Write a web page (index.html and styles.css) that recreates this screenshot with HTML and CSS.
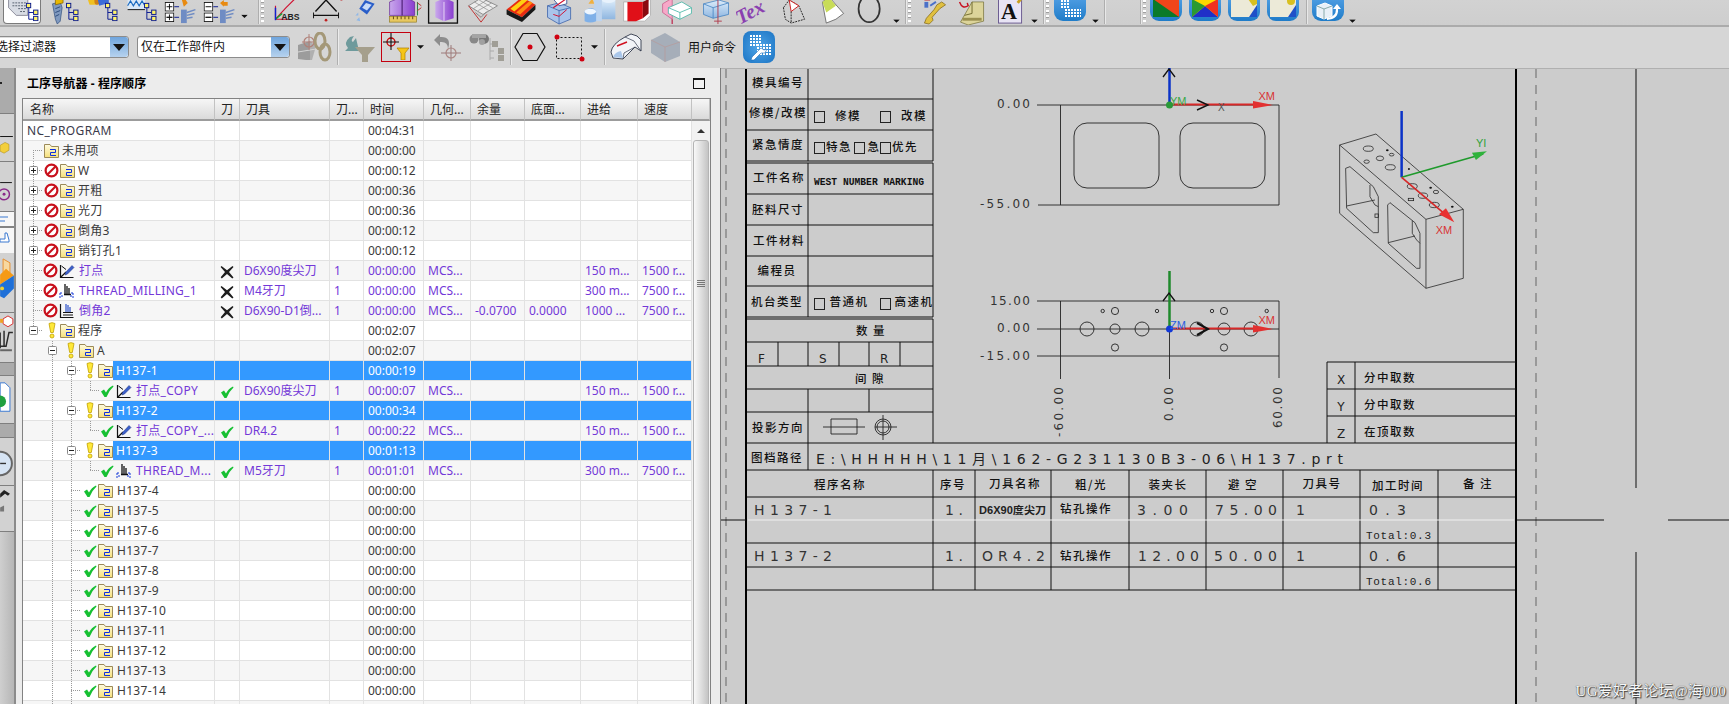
FILE: index.html
```html
<!DOCTYPE html>
<html lang="zh-CN">
<head>
<meta charset="utf-8">
<title>工序导航器 - 程序顺序</title>
<link rel="stylesheet" href="styles.css">
</head>
<body>
<svg class="defs" aria-hidden="true">
  <defs>
    <linearGradient id="fy" x1="0" y1="0" x2="0" y2="1"><stop offset="0" stop-color="#fffbe0"/><stop offset="1" stop-color="#f6e07a"/></linearGradient>
    <linearGradient id="pu" x1="0" y1="0" x2="1" y2="0"><stop offset="0" stop-color="#c9a8ec"/><stop offset="1" stop-color="#8a3fd0"/></linearGradient>
    <linearGradient id="lb" x1="0" y1="0" x2="0" y2="1"><stop offset="0" stop-color="#dcecfa"/><stop offset="1" stop-color="#8fb6e0"/></linearGradient>
    <symbol id="tree" viewBox="0 0 14 20"><path d="M3 4V18H8M3 11H8" fill="none" stroke="#0a1a90"/><rect x=".5" y="1.5" width="4.5" height="4.5" fill="#fff36a" stroke="#0a1a90"/><rect x="8" y="8.5" width="4.5" height="4.5" fill="#fff36a" stroke="#0a1a90"/><rect x="8" y="15" width="4.5" height="4.5" fill="#fff36a" stroke="#0a1a90"/></symbol>
    <symbol id="folder" viewBox="0 0 15 15"><path d="M.5 14.5V1.5H6L7.500 3.500H14.500V14.500Z" fill="url(#fy)" stroke="#9c8a58"/><path d="M6 6.500H11.500V9.500H6.500V12.500H12" fill="none" stroke="#1030e0"/></symbol>
    <symbol id="noent" viewBox="0 0 15 15"><circle cx="7.500" cy="7.500" r="5.900" fill="#fff" stroke="#c8101c" stroke-width="2.200"/><path d="M3.500 11.500L11.500 3.500" stroke="#c8101c" stroke-width="2.200"/></symbol>
    <symbol id="bulb" viewBox="0 0 10 17"><path d="M2 1.500Q5 -.2 8 1.500L6.300 10.500H3.700Z" fill="#ffe93a" stroke="#c2a100" stroke-width=".8"/><circle cx="5" cy="14" r="2" fill="#ffe93a" stroke="#c2a100" stroke-width=".8"/></symbol>
    <symbol id="chk" viewBox="0 0 14 14"><path d="M1 7.500L4 5.500L6 8.500Q8.500 3.500 13 1.500L13.500 2.500Q9 6.500 6.500 13H4.500Z" fill="#16c032"/></symbol>
    <symbol id="cross" viewBox="0 0 14 14"><path d="M1.500 1L7 5.300L12.500 1L13.500 2L9 7L13.500 12.500L12.300 13.500L7 9L1.800 13.500L.7 12.300L5 7L.6 2Z" fill="#1d1d1d"/></symbol>
    <symbol id="op1" viewBox="0 0 16 16"><path d="M1.500 2V14.500H14.500M1.500 14.500L7 9" fill="none" stroke="#111" stroke-width="1.200"/><path d="M2.500 3L7 6.500" stroke="#111"/><path d="M6.500 9.500L13 2.500L15 4.500L8.500 11L6 12Z" fill="#3b5fc8" stroke="#1a2f80" stroke-width=".5"/></symbol>
    <symbol id="op2" viewBox="0 0 16 16"><path d="M6 1V11M8 3V11M10 5V11M5 11.500H12" stroke="#111" stroke-width="1.300"/><path d="M1 10H4M1 10V15.500M12 10H15M2 13H5M11 13H13M14 10V15.500" stroke="#1438d8" stroke-width="1" fill="none" stroke-dasharray="2 1"/></symbol>
    <symbol id="op3" viewBox="0 0 16 16"><path d="M1.500 1V14.500H14.500" fill="none" stroke="#111" stroke-width="1.200"/><path d="M4 9.500H14M4 12H14" stroke="#111"/><path d="M7 1V9M9 2V9M11 4V9" stroke="#4a6ad0" stroke-width="1.400"/></symbol>
    <symbol id="plus" viewBox="0 0 9 9"><rect x=".5" y=".5" width="8" height="8" rx="1" fill="#fff" stroke="#8a8a8a"/><path d="M2 4.500H7M4.500 2V7" stroke="#222"/></symbol>
    <symbol id="minus" viewBox="0 0 9 9"><rect x=".5" y=".5" width="8" height="8" rx="1" fill="#fff" stroke="#8a8a8a"/><path d="M2 4.500H7" stroke="#222"/></symbol>
    <symbol id="pm" viewBox="0 0 10 10"><rect x=".5" y=".5" width="9" height="9" fill="#fff" stroke="#111"/><path d="M2 5H8" stroke="#111"/></symbol>
    <symbol id="drop" viewBox="0 0 8 4"><path d="M0 0H8L4 4Z" fill="#111"/></symbol>
  </defs>
</svg>

<header class="tb1">
  <div class="pressed">
    <svg class="i38" viewBox="0 0 38 26"><path d="M4-2H24V16H12L4 8Z" fill="#d8dce4" stroke="#667" stroke-width=".7"/><path d="M8 3H22M8 6H22M14 9H22M16 12H22" stroke="#55606e" stroke-dasharray="2 1"/><use href="#tree" x="22" y="2" width="14" height="20"/></svg>
  </div>
  <div class="grp g46">
    <svg class="i38" viewBox="0 0 38 26"><path d="M6 4L14 2L16 8L14 22L11 25L9 20Z" fill="#7f99bf" stroke="#2c4a7a" stroke-width=".7"/><path d="M9 9L14 7M9 13L14 11M9 17L13 15" stroke="#2c4a7a"/><path d="M9-2L17-2L17 3L9 5Z" fill="#e8b800" stroke="#7a5b00" stroke-width=".7"/><use href="#tree" x="20" y="2" width="14" height="20"/></svg>
    <svg class="i38" viewBox="0 0 38 26"><path d="M2-1H12V5H4Z" fill="#f0c020"/><ellipse cx="12" cy="1" rx="3" ry="4" fill="#d08018"/><path d="M12-3H24V3L14 6Z" fill="#3a6ad8"/><use href="#tree" x="20" y="2" width="14" height="20"/></svg>
    <svg class="i38" viewBox="0 0 38 26"><path d="M3-1V10H21V-1Z" fill="#d8e8f8"/><path d="M3 6L6 1L9 6L12 1L15 6L18 1L21 6" fill="none" stroke="#1a6ac0" stroke-width="1.200"/><path d="M3 10H21" stroke="#111"/><use href="#tree" x="20" y="2" width="14" height="20"/></svg>
    <svg class="i38" viewBox="0 0 38 26"><use href="#pm" x="2" y="2" width="10" height="10"/><use href="#pm" x="2" y="13" width="10" height="10"/><path d="M7 4V10M4 18H10M7 15V21" stroke="#111"/><path d="M12 7H17M12 18H17" stroke="#0a1a90"/><path d="M20 0H24L26 3L22 7L21 4Z" fill="#e88a10"/><path d="M19 10H25V24H19Z" fill="#6f8cc4"/><path d="M25 13L34 10M25 16L33 14M25 19L31 18" stroke="#6f8cc4" stroke-width="1.500"/></svg>
    <svg class="i38" viewBox="0 0 38 26"><use href="#pm" x="2" y="2" width="10" height="10"/><use href="#pm" x="2" y="13" width="10" height="10"/><path d="M4 18H10" stroke="#111"/><path d="M12 7H17M12 18H17" stroke="#0a1a90"/><path d="M19 3L23 0V2H27V6H23V7Z" fill="#e88a10"/><path d="M19 10H25V24H19Z" fill="#6f8cc4"/><path d="M25 13L34 10M25 16L33 14M25 19L31 18" stroke="#6f8cc4" stroke-width="1.500"/></svg>
    <svg class="dr" viewBox="0 0 8 26"><use href="#drop" x="1" y="15" width="7" height="4"/></svg>
  </div>
  <i class="vsep s1"></i><i class="dots"></i>
  <div class="grp g2">
    <svg class="i39" viewBox="0 0 39 26"><path d="M7 20V6M7 20L18 8M7 20H20M18 8L28 -2" fill="none" stroke="#d01030" stroke-width="1.200"/><path d="M7 20L14 14" stroke="#10a030" stroke-width="1.500"/><path d="M7 8V21" stroke="#1020d0" stroke-width="1.500"/><text x="13" y="21" class="abs">ABS</text></svg>
    <svg class="i39" viewBox="0 0 39 26"><path d="M8 12L19 0L30 12M6 16H32" fill="none" stroke="#111" stroke-width="1.400"/><path d="M6 13V19M32 13V19" stroke="#111"/><circle cx="19" cy="21" r="1.400" fill="#c02020"/><path d="M34 0H36" stroke="#c02020"/></svg>
    <svg class="i39" viewBox="0 0 39 26"><path d="M19 0L29 4L21 15L13 9Z" fill="#2a5ec8"/><path d="M20 3L26 5L21 11L16 8Z" fill="#c8dcf8"/><path d="M9 16L12 13L12 16ZM10 21L13 18L14 22Z" fill="#8fb8e8"/></svg>
    <svg class="i39" viewBox="0 0 39 26"><path d="M4 2L19-4L30 2V16H4Z" fill="url(#pu)" stroke="#602090" stroke-width=".7"/><path d="M17-2V16" stroke="#3a1060"/><rect x="4" y="17" width="28" height="6" fill="#e8c860" stroke="#907a20" stroke-width=".7"/><path d="M8 17V20M12 17V20M16 17V20M20 17V20M24 17V20M28 17V20" stroke="#604a10"/><path d="M33 2V16" stroke="#208040"/><path d="M33 3L37 6M33 11L37 8" stroke="#c03030"/></svg>
    <svg class="i39" viewBox="0 0 39 26"><rect x="4" y="-2" width="30" height="26" fill="none" stroke="#111" stroke-width="1.400"/><path d="M11 2L21-2L30 2V19L20 22L11 18Z" fill="url(#pu)"/><path d="M20 2V22" stroke="#e8d8f8"/></svg>
    <svg class="i39" viewBox="0 0 39 26"><path d="M5 6L18-2L35 6L20 15Z" fill="#ececec" stroke="#777" stroke-width=".8"/><path d="M10 9L24 0M15 11L29 3M11 2L26 11M16 0L30 8" stroke="#888" stroke-width=".7"/><path d="M5 6L18 23L24 15" fill="none" stroke="#c03030"/><path d="M12 13L18 18L24 12" fill="none" stroke="#888"/></svg>
    <svg class="i39" viewBox="0 0 39 26"><path d="M4 10L20-3L34 5L20 18Z" fill="#e82a10"/><path d="M8 9L22-2L26 0L12 12Z" fill="#ffcf10"/><path d="M14 13L28 1L31 3L18 15Z" fill="#ff8a10"/><path d="M4 10L20 18V23L4 15ZM20 18L34 5V10L20 23Z" fill="#181818"/></svg>
    <svg class="i39" viewBox="0 0 39 26"><path d="M6 6L18 3L30 8V20L18 25L6 18Z" fill="#a9c4ea" stroke="#3860a8" stroke-width=".8"/><path d="M6 6L18 11L30 8M18 11V25" fill="none" stroke="#3860a8" stroke-width=".8"/><path d="M12 -1H26V4L18 6Z" fill="#fff" stroke="#25408a" stroke-width=".8"/><path d="M12 8L28-3" stroke="#d01030" stroke-width="1.200"/><path d="M12 15L18 17L26 10" fill="none" stroke="#d01030"/></svg>
    <svg class="i39" viewBox="0 0 39 26"><path d="M14-2H22V22H14Z" fill="#bcd4f0"/><path d="M22 0V20H36V0Z" fill="url(#lb)"/><ellipse cx="29" cy="0" rx="7" ry="3" fill="#e8f2fc"/><path d="M6 10Q12 6 16 11V22Q10 25 4 22V12Z" fill="#7fb0e8"/><ellipse cx="10" cy="12" rx="6" ry="3" fill="#eef6ff"/><path d="M8 4L12-2L14 4Z" fill="#f0b040"/></svg>
    <svg class="i39" viewBox="0 0 39 26"><path d="M4 2H26L32-1V16L26 22H4Z" fill="#fff" stroke="#aaa" stroke-width=".8"/><path d="M8 2H24V19L17 22H8Z" fill="#e01018"/><path d="M24 2L30-1V14L24 19Z" fill="#8a0a10"/></svg>
    <svg class="i39" viewBox="0 0 39 26"><path d="M4 4L14-2V20L4 13Z" fill="#f7a8c8" stroke="#c05080" stroke-width=".7"/><path d="M10 8L24 2L34 8V14L22 20L10 14Z" fill="#fff" stroke="#3ab0a0" stroke-width=".8"/><path d="M10 8L22 13L34 8M22 13V20" fill="none" stroke="#3ab0a0" stroke-width=".8"/><path d="M14 20V25" stroke="#c04060" stroke-width="1.500"/></svg>
    <svg class="i39" viewBox="0 0 39 26"><path d="M6 4L22 0L32 3V15L16 19L6 15Z" fill="url(#lb)" stroke="#4080c0" stroke-width=".8"/><path d="M6 4L16 8L32 3M16 8V19" fill="none" stroke="#4080c0" stroke-width=".8"/><path d="M21-1V25M17 22H25" stroke="#b04050"/></svg>
    <svg class="i39" viewBox="0 0 39 26"><text x="2" y="20" class="tex" transform="rotate(-28 14 20)">Tex</text></svg>
    <svg class="i39" viewBox="0 0 39 26"><path d="M8 8L14 0L24 6L30 20L16 24L10 20Z" fill="none" stroke="#222" stroke-dasharray="2 1"/><path d="M14 0L24 6L16 12Z" fill="#fff" stroke="#d02020"/><path d="M16 12V24" stroke="#222" stroke-dasharray="2 1"/></svg>
    <svg class="i39" viewBox="0 0 39 26"><path d="M8 2L15-3L30 14L22 20L12 24Q10 14 8 2Z" fill="#fff" stroke="#555" stroke-width=".8"/><path d="M8 2L15-3L22 6L12 13Z" fill="#c8dc58"/></svg>
    <svg class="i39" viewBox="0 0 39 26"><ellipse cx="16" cy="9" rx="11" ry="14" fill="none" stroke="#333" stroke-width="1.800"/></svg>
    <svg class="dr" viewBox="0 0 8 26"><use href="#drop" x="1" y="20" width="7" height="4"/></svg>
  </div>
  <i class="vsep s2"></i><i class="dots"></i>
  <div class="grp g3">
    <svg class="i38" viewBox="0 0 38 26"><path d="M8 2H12V8H8Z" fill="#4a70c8"/><path d="M8 0H14" stroke="#c02020"/><path d="M26 2L30 5L24 9L16 18L17 21L13 25L8 24L10 19L18 10L21 5Z" fill="#e0c040" stroke="#7a6010" stroke-width=".7"/><path d="M14 6L20 2" stroke="#4a70c8" stroke-width="2"/></svg>
    <svg class="i38" viewBox="0 0 38 26"><path d="M10 16L18 2H30V22L14 26L6 23Z" fill="#dcd49a" stroke="#6f6a30" stroke-width=".7"/><path d="M18 2V14L10 16" fill="none" stroke="#6f6a30"/><path d="M5 2Q8 10 14 6L13 3" fill="none" stroke="#c81020" stroke-width="1.500"/><path d="M8 20H28" stroke="#9a9050" stroke-width="3"/></svg>
    <svg class="i38" viewBox="0 0 38 26"><rect x="6" y="-3" width="24" height="27" fill="#e8e4f4" stroke="#6a5a90"/><text x="8.500" y="20" class="bigA">A</text><path d="M26 3L30-2" stroke="#c8a020" stroke-width="3"/></svg>
    <svg class="dr" viewBox="0 0 8 26"><use href="#drop" x="1" y="20" width="7" height="4"/></svg>
  </div>
  <i class="vsep s3"></i><i class="dots"></i>
  <div class="grp g4">
    <div class="bbtn"><svg viewBox="0 0 32 21"><path d="M7 1H16M7 4H16M7 7H16M11 10H27M11 13H27M11 16H27" stroke="#fff" stroke-width="2" stroke-dasharray="2 1"/></svg></div>
    <svg class="dr" viewBox="0 0 8 26"><use href="#drop" x="1" y="20" width="7" height="4"/></svg>
  </div>
  <i class="vsep s4"></i>
  <i class="vsep s5"></i><i class="dots"></i>
  <div class="grp g5">
    <div class="bbtn"><svg viewBox="0 0 32 21"><rect x="3" y="-1" width="26" height="18" fill="#0a7a2a"/><path d="M3-1H29V17Z" fill="#f0451a"/><path d="M3-1L22 17H3Z" fill="#0a7a2a"/></svg></div>
    <div class="bbtn"><svg viewBox="0 0 32 21"><rect x="3" y="-1" width="26" height="18" fill="#ffd800"/><path d="M3 17L16 6L29 17Z" fill="#2030c8"/><path d="M3-1V17L16 6Z" fill="#2a9a30"/><path d="M29-1V17L16 6Z" fill="#f03020"/></svg></div>
    <div class="bbtn"><svg viewBox="0 0 32 21"><rect x="3" y="-1" width="26" height="18" fill="#ecead8"/><path d="M29 5V17H21Z" fill="#1f50c8"/><path d="M20-1H29V4L25 6Z" fill="#d8c020"/></svg></div>
    <div class="bbtn"><svg viewBox="0 0 32 21"><rect x="3" y="-1" width="26" height="18" fill="#ecead8"/><path d="M29 5V17H21Z" fill="#1f50c8"/><circle cx="24" cy="1" r="4" fill="#d8c020"/></svg></div>
  </div>
  <i class="vsep s6"></i>
  <div class="grp g6">
    <div class="bbtn"><svg viewBox="0 0 32 21"><path d="M5 6L13 3L20 6V16L12 19L5 16Z" fill="#e8f0f8" stroke="#fff"/><path d="M5 6L12 9L20 6M12 9V19" fill="none" stroke="#8aa"/><path d="M15 18Q24 17 24 9L21 9L25 4L29 9H26Q27 19 15 20Z" fill="#fff"/></svg></div>
    <svg class="dr" viewBox="0 0 8 26"><use href="#drop" x="1" y="20" width="7" height="4"/></svg>
  </div>
</header>

<div class="tb2">
  <div class="sel s-a"><span class="sel-t">选择过滤器</span><b class="sel-b"></b></div>
  <div class="sel s-b"><span class="sel-t">仅在工作部件内</span><b class="sel-b"></b></div>
  <svg class="w40 m4" viewBox="0 0 40 30"><path d="M4 13L16 9V28L12 28L4 27Z" fill="#9c9c9c"/><path d="M16 9L22 14L18 28L16 28Z" fill="#b0b0b0"/><path d="M4 20L22 17" stroke="#d4d4d4"/><circle cx="15" cy="10" r="5" fill="none" stroke="#b08078" stroke-width="1.200"/><path d="M15 2V18M8 10H22" stroke="#b08078"/><ellipse cx="26" cy="9" rx="5" ry="8" fill="none" stroke="#a49878" stroke-width="3"/><ellipse cx="31" cy="20" rx="5" ry="8" fill="none" stroke="#a49878" stroke-width="3"/></svg>
  <i class="bar m3"></i>
  <svg class="w36 m2" viewBox="0 0 36 30"><path d="M9 4Q2 10 7 15L4 18H18L15 5L12 9Q9 8 13 3Z" fill="#6e9a9c" transform="translate(0 1)"/><path d="M14 15H34L27 23V30H21V23Z" fill="#a59f8c"/></svg>
  <div class="hl m4"><svg viewBox="0 0 28 27"><circle cx="9" cy="9" r="4" fill="none" stroke="#c00" stroke-width="1.300"/><path d="M9 0V17M1 9H17" stroke="#111" stroke-width="1.100"/><path d="M15 15H27L23 20V27H19V20Z" fill="#f5c518" stroke="#b08000" stroke-width=".7"/></svg></div>
  <svg class="w10 m5" viewBox="0 0 10 6"><use href="#drop" x="1" y="1" width="7" height="4"/></svg>
  <svg class="w38 m2" viewBox="0 0 38 30"><path d="M6 8L12 2V5Q24 4 20 17Q20 9 12 10V14Z" fill="#8d8d8d"/><circle cx="23" cy="21" r="5" fill="none" stroke="#ad8a86" stroke-width="1.200"/><path d="M23 13V29M13 21H33" stroke="#9c7a7a"/></svg>
  <svg class="w38 m2" viewBox="0 0 38 30"><circle cx="6" cy="7" r="4.500" fill="#888"/><circle cx="16" cy="7" r="5" fill="#777"/><rect x="4" y="2" width="14" height="4" fill="#a4a4a4"/><circle cx="14" cy="10" r="3" fill="#a0a0a0"/><path d="M22 6V28M22 12H26M22 19H26M22 26H26" stroke="#aaa"/><rect x="24" y="9" width="6" height="6" fill="#a09e96"/><rect x="30" y="16" width="6" height="6" fill="#a09e96"/><rect x="30" y="23" width="6" height="6" fill="#a09e96"/></svg>
  <i class="bar m4"></i>
  <svg class="w34 m1" viewBox="0 0 34 30"><path d="M2 15L10 1.500H24L32 15L24 28.500H10Z" fill="none" stroke="#111" stroke-width="1.200"/><circle cx="17" cy="15" r="2.500" fill="#d00010"/></svg>
  <svg class="w36 m4" viewBox="0 0 36 30"><rect x="5.500" y="5.500" width="25" height="21" fill="none" stroke="#111" stroke-dasharray="2 2"/><circle cx="6" cy="5" r="2.500" fill="#d00010"/><circle cx="31" cy="27" r="2.500" fill="#d00010"/></svg>
  <svg class="w10 m3" viewBox="0 0 10 6"><use href="#drop" x="1" y="1" width="7" height="4"/></svg>
  <i class="bar m4"></i>
  <svg class="w36 m2" viewBox="0 0 36 30"><path d="M3 20Q4 12 17 5L23 2Q30 3 33 8V19L27 15L15 27L5 26Z" fill="#f2f4f8" stroke="#30384a" stroke-width=".9"/><path d="M17 5L26 9L33 19M15 27L16 21L27 15" fill="none" stroke="#30384a" stroke-width=".7"/><path d="M9 14L19 10" stroke="#d01020" stroke-width="1.400"/><path d="M5 25Q7 20 13 19L15 26Z" fill="#a9c6ea"/></svg>
  <svg class="w36 m4" viewBox="0 0 36 30"><path d="M3 8L17 1L32 10V24L17 30L3 21Z" fill="#a6aeb9"/><path d="M3 8L17 15L32 10M17 15V30" fill="none" stroke="#b89a9a" stroke-width=".7"/></svg>
  <span class="cmd m4">用户命令</span>
  <div class="bbig m6"><svg viewBox="0 0 32 32"><path d="M7 5H18M7 8H18M7 11H18M7 14H14M14 14H28M14 17H28M14 20H28M14 23H28" stroke="#fff" stroke-width="2" stroke-dasharray="2 1"/><path d="M18 17L14 21L9 26L8 29L11 29L18 22L22 22L24 18L21 19Z" fill="#fff" stroke="#1c6cb8" stroke-width=".6"/></svg></div>
</div>

<main class="main">
  <aside class="strip">
    <div class="tile dk h46"><i class="spk"></i></div>
    <div class="tile h48"><svg viewBox="0 0 14 48"><path d="M0 23H13" stroke="#111"/><path d="M0 32L5 29L9 31V37L4 40L0 38Z" fill="#f3cf3c" stroke="#a68510" stroke-width=".5"/></svg></div>
    <div class="tile h50"><svg viewBox="0 0 14 50"><path d="M0 21H12" stroke="#111"/><circle cx="4" cy="33" r="5.500" fill="none" stroke="#8a2a8a" stroke-width="1.500"/><circle cx="4" cy="33" r="1.500" fill="#8a2a8a"/></svg></div>
    <div class="tile lt h40"><svg viewBox="0 0 14 41"><path d="M0 5H8M0 9H5" stroke="#3a78d0"/><path d="M0 15H14" stroke="#111"/><path d="M0 27H5V21H7L9 28V30H0Z" fill="#fff" stroke="#3a78d0"/></svg></div>
    <div class="tile h60"><svg viewBox="0 0 14 60"><path d="M3 20V6L10 10V22" stroke="#e89030" fill="#f8d8a0"/><path d="M0 22L6 16L14 23L0 32Z" fill="#f59a16"/><path d="M0 32L14 23V36L4 46L0 44Z" fill="#1f70d8"/><circle cx="2" cy="36" r="2" fill="#f0d030"/></svg></div>
    <div class="tile h50"><svg viewBox="0 0 14 50"><path d="M3 6L8 3L13 6V11L8 14L3 11Z" fill="#fff" stroke="#d83030"/><path d="M0 8H3" stroke="#f0a020" stroke-width="4"/><path d="M0 20V36M4 18V34M0 34H6L9 20H13" stroke="#2a2a2a" stroke-width="1.500" fill="none"/><path d="M0 38H12" stroke="#666" stroke-width="2"/></svg></div>
    <div class="tile dk h12"></div>
    <div class="tile h48"><svg viewBox="0 0 14 48"><path d="M0 7H5L10 12V36H0Z" fill="#fff" stroke="#3a78d0"/><circle cx="0" cy="26" r="6" fill="#20a040"/></svg></div>
    <div class="tile dk h14"></div>
    <div class="tile h48"><svg viewBox="0 0 14 48"><circle cx="0" cy="26" r="12" fill="#d6e4f4" stroke="#666" stroke-width="2"/><path d="M0 26H6" stroke="#333" stroke-width="1.400"/></svg></div>
    <div class="tile h46"><svg viewBox="0 0 14 46"><path d="M0 8L4 4L10 8L8 10L5 8L0 12Z" fill="#222"/><path d="M0 22L4 20V26L0 26Z" fill="#777"/></svg></div>
    <div class="strip-rest"></div>
  </aside>

  <section class="nav">
    <div class="nav-title"><span>工序导航器 - 程序顺序</span><i class="max"></i></div>
    <div class="tbl-wrap">
      <table class="grid">
        <colgroup><col class="c0"><col class="c1"><col class="c2"><col class="c3"><col class="c4"><col class="c5"><col class="c6"><col class="c7"><col class="c8"><col class="c9"><col class="c10"></colgroup>
        <thead>
          <tr><th>名称</th><th>刀</th><th>刀具</th><th>刀...</th><th>时间</th><th>几何...</th><th>余量</th><th>底面...</th><th>进给</th><th>速度</th><th></th></tr>
        </thead>
        <tbody>
          <tr><td class="root">NC_PROGRAM</td><td></td><td></td><td></td><td>00:04:31</td><td></td><td></td><td></td><td></td><td></td>
            <td rowspan="30" class="sb"><div class="sb-up"><svg viewBox="0 0 8 4"><path d="M0 4L4 0L8 4Z" fill="#333"/></svg></div><div class="sb-th"><div class="sb-gr"><i></i><i></i><i></i><i></i></div></div></td></tr>
          <tr><td><div class="t"><i class="g gr"></i><i class="f"><svg><use href="#folder"/></svg></i><span class="lb">未用项</span></div></td><td></td><td></td><td></td><td>00:00:00</td><td></td><td></td><td></td><td></td><td></td></tr>
          <tr><td><div class="t"><i class="g gt"><svg class="ex"><use href="#plus"/></svg></i><i class="s"><svg class="no"><use href="#noent"/></svg></i><i class="f2"><svg><use href="#folder"/></svg></i><span class="lb0">W</span></div></td><td></td><td></td><td></td><td>00:00:12</td><td></td><td></td><td></td><td></td><td></td></tr>
          <tr><td><div class="t"><i class="g gt"><svg class="ex"><use href="#plus"/></svg></i><i class="s"><svg class="no"><use href="#noent"/></svg></i><i class="f2"><svg><use href="#folder"/></svg></i><span class="lb0">开粗</span></div></td><td></td><td></td><td></td><td>00:00:36</td><td></td><td></td><td></td><td></td><td></td></tr>
          <tr><td><div class="t"><i class="g gt"><svg class="ex"><use href="#plus"/></svg></i><i class="s"><svg class="no"><use href="#noent"/></svg></i><i class="f2"><svg><use href="#folder"/></svg></i><span class="lb0">光刀</span></div></td><td></td><td></td><td></td><td>00:00:36</td><td></td><td></td><td></td><td></td><td></td></tr>
          <tr><td><div class="t"><i class="g gt"><svg class="ex"><use href="#plus"/></svg></i><i class="s"><svg class="no"><use href="#noent"/></svg></i><i class="f2"><svg><use href="#folder"/></svg></i><span class="lb0">倒角3</span></div></td><td></td><td></td><td></td><td>00:00:12</td><td></td><td></td><td></td><td></td><td></td></tr>
          <tr><td><div class="t"><i class="g gt"><svg class="ex"><use href="#plus"/></svg></i><i class="s"><svg class="no"><use href="#noent"/></svg></i><i class="f2"><svg><use href="#folder"/></svg></i><span class="lb0">销钉孔1</span></div></td><td></td><td></td><td></td><td>00:00:12</td><td></td><td></td><td></td><td></td><td></td></tr>
          <tr class="op"><td><div class="t"><i class="g gt"></i><i class="s16"><svg class="no"><use href="#noent"/></svg></i><i class="o"><svg><use href="#op1"/></svg></i><span class="lb0">打点</span></div></td><td class="ck"><svg><use href="#cross"/></svg></td><td>D6X90度尖刀</td><td>1</td><td>00:00:00</td><td>MCS...</td><td></td><td></td><td>150 m...</td><td>1500 r...</td></tr>
          <tr class="op"><td><div class="t"><i class="g gt"></i><i class="s16"><svg class="no"><use href="#noent"/></svg></i><i class="o"><svg><use href="#op2"/></svg></i><span class="lb0">THREAD_MILLING_1</span></div></td><td class="ck"><svg><use href="#cross"/></svg></td><td>M4牙刀</td><td>1</td><td>00:00:00</td><td>MCS...</td><td></td><td></td><td>300 m...</td><td>7500 r...</td></tr>
          <tr class="op"><td><div class="t"><i class="g gt"></i><i class="s16"><svg class="no"><use href="#noent"/></svg></i><i class="o"><svg><use href="#op3"/></svg></i><span class="lb0">倒角2</span></div></td><td class="ck"><svg><use href="#cross"/></svg></td><td>D6X90-D1倒...</td><td>1</td><td>00:00:00</td><td>MCS...</td><td>-0.0700</td><td>0.0000</td><td>1000 ...</td><td>7500 r...</td></tr>
          <tr><td><div class="t"><i class="g gl"><svg class="ex"><use href="#minus"/></svg></i><i class="s"><svg class="bu"><use href="#bulb"/></svg></i><i class="f2"><svg><use href="#folder"/></svg></i><span class="lb0">程序</span></div></td><td></td><td></td><td></td><td>00:02:07</td><td></td><td></td><td></td><td></td><td></td></tr>
          <tr><td><div class="t"><i class="g"></i><i class="g gv"><svg class="ex"><use href="#minus"/></svg></i><i class="s"><svg class="bu"><use href="#bulb"/></svg></i><i class="f2"><svg><use href="#folder"/></svg></i><span class="lb0">A</span></div></td><td></td><td></td><td></td><td>00:02:07</td><td></td><td></td><td></td><td></td><td></td></tr>
          <tr class="sl"><td><div class="t"><i class="g"></i><i class="g gv"></i><i class="g gt"><svg class="ex"><use href="#minus"/></svg></i><i class="s"><svg class="bu"><use href="#bulb"/></svg></i><i class="f3"><svg><use href="#folder"/></svg></i><span class="lbs">H137-1</span></div></td><td></td><td></td><td></td><td>00:00:19</td><td></td><td></td><td></td><td></td><td></td></tr>
          <tr class="op"><td><div class="t"><i class="g"></i><i class="g gv"></i><i class="g gv"></i><i class="g gl"></i><i class="s16"><svg class="ch"><use href="#chk"/></svg></i><i class="o"><svg><use href="#op1"/></svg></i><span class="lb0">打点_COPY</span></div></td><td class="ck"><svg><use href="#chk"/></svg></td><td>D6X90度尖刀</td><td>1</td><td>00:00:07</td><td>MCS...</td><td></td><td></td><td>150 m...</td><td>1500 r...</td></tr>
          <tr class="sl"><td><div class="t"><i class="g"></i><i class="g gv"></i><i class="g gt"><svg class="ex"><use href="#minus"/></svg></i><i class="s"><svg class="bu"><use href="#bulb"/></svg></i><i class="f3"><svg><use href="#folder"/></svg></i><span class="lbs">H137-2</span></div></td><td></td><td></td><td></td><td>00:00:34</td><td></td><td></td><td></td><td></td><td></td></tr>
          <tr class="op"><td><div class="t"><i class="g"></i><i class="g gv"></i><i class="g gv"></i><i class="g gl"></i><i class="s16"><svg class="ch"><use href="#chk"/></svg></i><i class="o"><svg><use href="#op1"/></svg></i><span class="lb0">打点_COPY_...</span></div></td><td class="ck"><svg><use href="#chk"/></svg></td><td>DR4.2</td><td>1</td><td>00:00:22</td><td>MCS...</td><td></td><td></td><td>150 m...</td><td>1500 r...</td></tr>
          <tr class="sl"><td><div class="t"><i class="g"></i><i class="g gv"></i><i class="g gt"><svg class="ex"><use href="#minus"/></svg></i><i class="s"><svg class="bu"><use href="#bulb"/></svg></i><i class="f3"><svg><use href="#folder"/></svg></i><span class="lbs">H137-3</span></div></td><td></td><td></td><td></td><td>00:01:13</td><td></td><td></td><td></td><td></td><td></td></tr>
          <tr class="op"><td><div class="t"><i class="g"></i><i class="g gv"></i><i class="g gv"></i><i class="g gl"></i><i class="s16"><svg class="ch"><use href="#chk"/></svg></i><i class="o"><svg><use href="#op2"/></svg></i><span class="lb0">THREAD_M...</span></div></td><td class="ck"><svg><use href="#chk"/></svg></td><td>M5牙刀</td><td>1</td><td>00:01:01</td><td>MCS...</td><td></td><td></td><td>300 m...</td><td>7500 r...</td></tr>
          <tr><td><div class="t"><i class="g"></i><i class="g gv"></i><i class="g gt"></i><i class="s"><svg class="ch"><use href="#chk"/></svg></i><i class="f3"><svg><use href="#folder"/></svg></i><span class="lbp">H137-4</span></div></td><td></td><td></td><td></td><td>00:00:00</td><td></td><td></td><td></td><td></td><td></td></tr>
          <tr><td><div class="t"><i class="g"></i><i class="g gv"></i><i class="g gt"></i><i class="s"><svg class="ch"><use href="#chk"/></svg></i><i class="f3"><svg><use href="#folder"/></svg></i><span class="lbp">H137-5</span></div></td><td></td><td></td><td></td><td>00:00:00</td><td></td><td></td><td></td><td></td><td></td></tr>
          <tr><td><div class="t"><i class="g"></i><i class="g gv"></i><i class="g gt"></i><i class="s"><svg class="ch"><use href="#chk"/></svg></i><i class="f3"><svg><use href="#folder"/></svg></i><span class="lbp">H137-6</span></div></td><td></td><td></td><td></td><td>00:00:00</td><td></td><td></td><td></td><td></td><td></td></tr>
          <tr><td><div class="t"><i class="g"></i><i class="g gv"></i><i class="g gt"></i><i class="s"><svg class="ch"><use href="#chk"/></svg></i><i class="f3"><svg><use href="#folder"/></svg></i><span class="lbp">H137-7</span></div></td><td></td><td></td><td></td><td>00:00:00</td><td></td><td></td><td></td><td></td><td></td></tr>
          <tr><td><div class="t"><i class="g"></i><i class="g gv"></i><i class="g gt"></i><i class="s"><svg class="ch"><use href="#chk"/></svg></i><i class="f3"><svg><use href="#folder"/></svg></i><span class="lbp">H137-8</span></div></td><td></td><td></td><td></td><td>00:00:00</td><td></td><td></td><td></td><td></td><td></td></tr>
          <tr><td><div class="t"><i class="g"></i><i class="g gv"></i><i class="g gt"></i><i class="s"><svg class="ch"><use href="#chk"/></svg></i><i class="f3"><svg><use href="#folder"/></svg></i><span class="lbp">H137-9</span></div></td><td></td><td></td><td></td><td>00:00:00</td><td></td><td></td><td></td><td></td><td></td></tr>
          <tr><td><div class="t"><i class="g"></i><i class="g gv"></i><i class="g gt"></i><i class="s"><svg class="ch"><use href="#chk"/></svg></i><i class="f3"><svg><use href="#folder"/></svg></i><span class="lbp">H137-10</span></div></td><td></td><td></td><td></td><td>00:00:00</td><td></td><td></td><td></td><td></td><td></td></tr>
          <tr><td><div class="t"><i class="g"></i><i class="g gv"></i><i class="g gt"></i><i class="s"><svg class="ch"><use href="#chk"/></svg></i><i class="f3"><svg><use href="#folder"/></svg></i><span class="lbp">H137-11</span></div></td><td></td><td></td><td></td><td>00:00:00</td><td></td><td></td><td></td><td></td><td></td></tr>
          <tr><td><div class="t"><i class="g"></i><i class="g gv"></i><i class="g gt"></i><i class="s"><svg class="ch"><use href="#chk"/></svg></i><i class="f3"><svg><use href="#folder"/></svg></i><span class="lbp">H137-12</span></div></td><td></td><td></td><td></td><td>00:00:00</td><td></td><td></td><td></td><td></td><td></td></tr>
          <tr><td><div class="t"><i class="g"></i><i class="g gv"></i><i class="g gt"></i><i class="s"><svg class="ch"><use href="#chk"/></svg></i><i class="f3"><svg><use href="#folder"/></svg></i><span class="lbp">H137-13</span></div></td><td></td><td></td><td></td><td>00:00:00</td><td></td><td></td><td></td><td></td><td></td></tr>
          <tr><td><div class="t"><i class="g"></i><i class="g gv"></i><i class="g gt"></i><i class="s"><svg class="ch"><use href="#chk"/></svg></i><i class="f3"><svg><use href="#folder"/></svg></i><span class="lbp">H137-14</span></div></td><td></td><td></td><td></td><td>00:00:00</td><td></td><td></td><td></td><td></td><td></td></tr>
          <tr><td><div class="t"><i class="g"></i><i class="g gv"></i><i class="g gv"></i></div></td><td></td><td></td><td></td><td></td><td></td><td></td><td></td><td></td><td></td></tr>
        </tbody>
      </table>
    </div>
  </section>

  <div class="canvas">
    <svg class="draw" viewBox="721 68 1008 636" xmlns="http://www.w3.org/2000/svg">
      <path class="top" d="M721 68.500H1729"/>
      <path class="dash" d="M726 69V704M1536 69V704"/>
      <path class="ln" d="M746 99H933M746 130H933M746 161H933M746 163H933M746 194H933M746 225H933M746 256H933M746 286H933M746 317H933M746 319H933M746 342H933M746 366H933M746 389H933M746 412H933M746 443H1516M746 470H1516M746 497H1516M746 543H1516M746 567H1516M746 590H1516"/>
      <path class="ln" d="M808 69V161M808 163V317M808 342V366M808 389V470M778 342V366M839 342V366M869 342V366M869 389V412M900 342V366M933 69V161M933 163V317M933 319V443M933 470V590M975 470V590M1051 470V590M1129 470V590M1206 470V590M1283 470V590M1360 470V590M1438 470V590"/>
      <path class="thick" d="M746 69V704M1516 69V704"/>
      <path class="ln" d="M721 520H746M1517 520H1604M1668 520H1729M1636 69V488M1636 552V704"/>
      <path class="wh" d="M748 520H1514"/>

      <path class="ln" d="M1327 362H1516M1327 389H1516M1327 416H1516M1327 362V443M1355 362V443"/>

      <g class="cn">
        <text x="778" y="87">模具编号</text><text x="778" y="117">修模/改模</text><text x="778" y="149">紧急情度</text><text x="779" y="182">工件名称</text><text x="778" y="214">胚料尺寸</text><text x="779" y="245">工件材料</text><text x="777" y="275">编程员</text><text x="777" y="306">机台类型</text>
        <text x="871" y="335">数 量</text><text x="870" y="383">间 隙</text><text x="778" y="432">投影方向</text><text x="777" y="462">图档路径</text>
        <text x="848" y="120">修模</text><text x="914" y="120">改模</text>
        <text x="839" y="151">特急</text><text x="874" y="151">急</text><text x="905" y="151">优先</text>
        <text x="849" y="306">普通机</text><text x="914" y="306">高速机</text>
        <text x="840" y="489">程序名称</text><text x="953" y="489">序号</text><text x="1015" y="488">刀具名称</text><text x="1091" y="489">粗/光</text><text x="1168" y="489">装夹长</text><text x="1243" y="489">避 空</text><text x="1322" y="488">刀具号</text><text x="1398" y="490">加工时间</text><text x="1478" y="488">备 注</text>
        <text x="1086" y="513">钻孔操作</text><text x="1086" y="560">钻孔操作</text>
        <text x="1390" y="382">分中取数</text><text x="1390" y="409">分中取数</text><text x="1390" y="436">在顶取数</text>
      </g>
      <g class="boxes"><rect x="814.500" y="111.500" width="10" height="11"/><rect x="880.500" y="111.500" width="10" height="11"/><rect x="814.500" y="142.500" width="10" height="11"/><rect x="854.500" y="142.500" width="10" height="11"/><rect x="880.500" y="142.500" width="10" height="11"/><rect x="814.500" y="298.500" width="10" height="11"/><rect x="880.500" y="298.500" width="10" height="11"/></g>
      <text class="wnm" x="814" y="185" textLength="110" lengthAdjust="spacingAndGlyphs">WEST NUMBER MARKING</text>
      <g class="lat">
        <text x="758" y="363">F</text><text x="819" y="363">S</text><text x="880" y="363">R</text>
        <text x="1341" y="384" class="mid">X</text><text x="1341" y="411" class="mid">Y</text><text x="1341" y="438" class="mid">Z</text>
      </g>
      <g class="geo"><path d="M823 427H865M831 419H857V434H831ZM875 427H897M883 415V440"/><circle cx="883" cy="427" r="8"/><circle cx="883" cy="427" r="6"/></g>
      <text class="path" x="816" y="464" textLength="527" lengthAdjust="spacing">E:\HHHHH\11月\162-G231130B3-06\H137.prt</text>
      <g class="val">
        <text x="754" y="515" textLength="78" lengthAdjust="spacing">H137-1</text><text x="945" y="515" textLength="18" lengthAdjust="spacing">1.</text>
        <text class="sm" x="979" y="514" textLength="67" lengthAdjust="spacingAndGlyphs">D6X90度尖刀</text>
        <text x="1137" y="515" textLength="51" lengthAdjust="spacing">3.00</text><text x="1215" y="515" textLength="62" lengthAdjust="spacing">75.00</text><text x="1296" y="515">1</text><text x="1369" y="515" textLength="37" lengthAdjust="spacing">0.3</text>
        <text class="sm2" x="1366" y="539" textLength="65" lengthAdjust="spacing">Total:0.3</text>
        <text x="754" y="561" textLength="78" lengthAdjust="spacing">H137-2</text><text x="945" y="561" textLength="18" lengthAdjust="spacing">1.</text><text x="982" y="561" textLength="63" lengthAdjust="spacing">OR4.2</text>
        <text x="1138" y="561" textLength="61" lengthAdjust="spacing">12.00</text><text x="1214" y="561" textLength="63" lengthAdjust="spacing">50.00</text><text x="1296" y="561">1</text><text x="1369" y="561" textLength="37" lengthAdjust="spacing">0.6</text>
        <text class="sm2" x="1366" y="585" textLength="65" lengthAdjust="spacing">Total:0.6</text>
      </g>
      <g class="dim">
        <text x="997" y="108" textLength="33" lengthAdjust="spacing">0.00</text><text x="980" y="208" textLength="50" lengthAdjust="spacing">-55.00</text><text x="990" y="305" textLength="40" lengthAdjust="spacing">15.00</text><text x="997" y="332" textLength="33" lengthAdjust="spacing">0.00</text><text x="980" y="360" textLength="50" lengthAdjust="spacing">-15.00</text>
        <text transform="translate(1063 437) rotate(-90)" textLength="50" lengthAdjust="spacing">-60.00</text><text transform="translate(1173 421) rotate(-90)" textLength="34" lengthAdjust="spacing">0.00</text><text transform="translate(1282 428) rotate(-90)" textLength="41" lengthAdjust="spacing">60.00</text>
      </g>

      <g class="geo">
        <path d="M1037 105H1279V205H1038M1060.500 105V205"/>
        <rect x="1074" y="123" width="85" height="65" rx="13"/><rect x="1180" y="123" width="85" height="65" rx="13"/>
        <path d="M1037 301H1279M1037 329H1279M1037 356H1279M1060.500 301V379M1169.500 301V379M1279 301V378"/>
        <g class="soft"><circle cx="1087" cy="329" r="7"/><circle cx="1115" cy="329" r="5"/><circle cx="1142" cy="329" r="7"/><circle cx="1197" cy="329" r="7"/><circle cx="1224" cy="329" r="6"/><circle cx="1251" cy="329" r="7"/><circle cx="1115" cy="311" r="3.600"/><circle cx="1224" cy="311" r="3.600"/><circle cx="1115" cy="347.500" r="3.600"/><circle cx="1224" cy="347.500" r="3.600"/><circle cx="1102.700" cy="311" r="1.700"/><circle cx="1157" cy="311" r="1.700"/><circle cx="1212" cy="311" r="1.700"/><circle cx="1266.700" cy="311" r="1.700"/></g>
      </g>

      <g transform="translate(1040 70) scale(.3333)">
        <g class="iso">
          <path d="M899 225L1008 192L1270 418L1158 448ZM899 225V430L1158 655V448M1158 655L1270 625V418"/>
          <path d="M917 295L930 290L1000 350L1015 380V488H1000L920 415ZM920 408L1005 390M990 345V380L1005 405L1015 410"/>
          <path d="M1043 405L1050 398L1125 458L1140 490V595H1130L1045 520ZM1045 518L1125 498M1117 452V490L1130 510L1140 520"/>
          <ellipse cx="985" cy="236" rx="15" ry="8"/><ellipse cx="980" cy="275" rx="8" ry="5"/><ellipse cx="1020" cy="265" rx="11" ry="7"/><ellipse cx="1055" cy="254" rx="7" ry="4"/><ellipse cx="1051" cy="292" rx="15" ry="8"/><ellipse cx="1117" cy="349" rx="15" ry="8"/><ellipse cx="1149" cy="377" rx="14" ry="8"/><ellipse cx="1183" cy="405" rx="15" ry="8"/><ellipse cx="1188" cy="366" rx="8" ry="5"/>
          <rect x="1105" y="385" width="16" height="7"/><rect x="1005" y="432" width="10" height="10"/>
        </g>
        <g class="iso-f"><ellipse cx="1042" cy="241" rx="4" ry="3"/><ellipse cx="1172" cy="353" rx="4" ry="3"/><ellipse cx="1237" cy="410" rx="4" ry="3"/><ellipse cx="1107" cy="297" rx="3" ry="3"/></g>
        <path class="az" d="M1085 322V123"/>
        <path class="ay" d="M1085 322L1330 252"/><path class="ayh" d="M1296 248L1341 244L1308 270Z"/>
        <path class="ax" d="M1085 322L1230 445"/><path class="axh" d="M1197 433L1218 415L1243 457Z"/>
        <text class="lred" x="1187" y="491">XM</text><text class="lgrn" x="1308" y="230">YI</text>
      </g>

      <path class="az1" d="M1169.500 105V68"/><path class="chev" d="M1163 77L1169 69L1175 77"/>
      <path class="ax1" d="M1169.500 104.500H1260"/><path class="axh1" d="M1253 101L1273 105L1253 108.500Z"/>
      <path class="chev2" d="M1197 100L1208 105L1197 110"/>
      <circle cx="1169.500" cy="105" r="3.500" class="dg"/>
      <text class="lgrn1" x="1170" y="105">YM</text><text class="lred1" x="1258.500" y="100">XM</text><text class="lgr" x="1218" y="111">X</text>

      <path class="ay1" d="M1169.500 329V271"/><path class="chev" d="M1163 301L1169 293L1175 301"/>
      <path class="ax1" d="M1169.500 328.500H1260"/><path class="axh1" d="M1253 325L1273 329L1253 332.500Z"/>
      <path class="chev3" d="M1197 323L1208 329L1197 335"/>
      <circle cx="1169.500" cy="329" r="3.500" class="db"/>
      <text class="lblu" x="1170" y="329">ZM</text><text class="lred1" x="1258.500" y="324">XM</text>
    </svg>
    <span class="mark">UG爱好者论坛@海000</span>
  </div>
</main>
</body>
</html>
```
FILE: styles.css
```css
*{box-sizing:border-box}
html,body{margin:0;padding:0}
body{width:1729px;height:704px;overflow:hidden;background:#d4d4d4;font:12px "Noto Sans","Noto Sans CJK SC",sans-serif;color:#222;display:flex;flex-direction:column}
.defs{width:0;height:0;flex:none;display:block}
svg{display:block;flex:none;overflow:hidden}
i{font-style:normal}

/* top toolbar */
.tb1{height:27px;flex:none;display:flex;background:linear-gradient(#d2d2d2,#cecece);border-bottom:2px solid #ababab;overflow:hidden}
.pressed{margin-left:3px;width:38px;height:24px;background:#fff;border:1px solid #7b7b7b;border-top:0;border-radius:0 0 4px 4px;overflow:hidden}
.grp{display:flex}
.g46{margin-left:5px;gap:.75px}
.i38{width:38px;height:25px}
.i39{width:39px;height:25px}
.dr{width:8px;height:25px}
.vsep{display:block;width:1px;height:24px;flex:none;background:#aeaeae;box-shadow:1px 0 0 #e8e8e8}
.dots{display:block;width:3px;height:22px;flex:none;margin-left:2px;background:repeating-linear-gradient(#fff 0 2px,#9f9f9f 2px 3px,transparent 3px 5px)}
.s1{margin-left:10px}
.s2{margin-left:5px}
.s3{margin-left:5px}
.s4{margin-left:5px}
.s5{margin-left:35px}
.s6{margin-left:7px}
.g2{margin-left:4px}
.g3{margin-left:5px}
.g4{margin-left:5px;gap:5px}
.g5{margin-left:4px;gap:7px}
.g6{margin-left:5px;gap:4px}
.bbtn{width:32px;height:21px;background:linear-gradient(#4a9ae0,#1f7cc8);border-radius:0 0 9px 9px;overflow:hidden;flex:none}
.bbtn svg{width:32px;height:21px}
.abs{font:bold 9px "Liberation Sans",sans-serif;fill:#222}
.tex{font:bold italic 21px "Liberation Serif",serif;fill:#8a3fb0}
.bigA{font:bold 23px "Liberation Serif",serif;fill:#111}

/* second toolbar */
.tb2{height:41px;flex:none;display:flex;align-items:center;background:#d6d6d6;padding-bottom:2px;overflow:hidden}
.sel{height:22px;background:#fff;border:1px solid #8c8c8c;border-radius:3px;display:flex;justify-content:space-between;box-shadow:inset 0 1px 0 #ddd;font-size:12px;color:#111;line-height:20px;flex:none}
.s-a{width:137px;margin-left:-8px}
.s-b{width:153px;margin-left:8px}
.sel-t{padding-left:3px}
.sel-b{display:block;width:18px;background:linear-gradient(#6fa5dd,#b6d2ee);position:relative;border-radius:0 3px 3px 0}
.sel-b::after{content:"";position:absolute;left:3px;top:7px;border:6px solid transparent;border-top:7px solid #141414;border-bottom:0}
.w40{width:40px;height:30px}
.w38{width:38px;height:30px}
.w36{width:36px;height:30px}
.w34{width:34px;height:30px}
.w10{width:10px;height:6px}
.m1{margin-left:1px}
.m2{margin-left:2px}
.m3{margin-left:3px}
.m4{margin-left:4px}
.m5{margin-left:5px}
.m6{margin-left:6px}
.bar{display:block;width:2px;height:36px;flex:none;background:#b0b0b0;border-right:1px solid #ececec}
.hl{width:30px;height:30px;border:1px solid #c4000f;flex:none}
.hl svg{width:28px;height:27px}
.cmd{font-size:12px;color:#111;width:49px;flex:none;white-space:nowrap}
.bbig{width:32px;height:32px;border-radius:8px;background:radial-gradient(circle at 50% 50%,#4ea4e6,#1b74c4);flex:none}
.bbig svg{width:32px;height:32px}

/* main row */
.main{flex:1;display:flex;min-height:0;overflow:hidden}

/* left strip */
.strip{width:16px;flex:none;display:flex;flex-direction:column;background:#bdbdbd;border-right:2px solid #8b8b8b;overflow:hidden}
.tile{flex:none;background:#d2d2d2;border-bottom:1px solid #7f7f7f;overflow:hidden}
.tile svg{width:14px;height:100%}
.dk{background:#ababab}
.lt{background:#f6f6f6;border-bottom:0}
.h12{height:13px}
.h14{height:14px}
.h40{height:41px}
.h46{height:46px}
.h48{height:48px}
.h50{height:50px}
.h60{height:60px}
.spk{display:block;width:2px;height:2px;background:#222;margin-top:14px}
.strip-rest{flex:1;background:linear-gradient(90deg,#cfcfcf,#b6b6b6)}

/* navigator panel */
.nav{width:705px;flex:none;background:#ececec;padding-left:6px;border-right:1px solid #7d7d7d}
.nav-title{height:30px;display:flex;align-items:center;justify-content:space-between;font-size:12px;color:#000;font-weight:700;padding:0 15px 0 5px;letter-spacing:.1px}
.max{display:block;width:12px;height:11px;border:1px solid #111;border-top-width:2px;background:#f2f2f2}
.tbl-wrap{width:689px;border:1px solid #828282;border-bottom:0;background:#fff}
.grid{border-collapse:separate;border-spacing:0;table-layout:fixed;width:687px}
.c0{width:192px}
.c1{width:25px}
.c2{width:90px}
.c3{width:34px}
.c4{width:60px}
.c5{width:47px}
.c6{width:54px}
.c7{width:56px}
.c8{width:57px}
.c9{width:54px}
.c10{width:18px}
th{height:22px;padding:0 0 0 6px;font-weight:400;text-align:left;color:#222;background:linear-gradient(#f6f6f6,#dadada);border-right:1px solid #c2c2c2;border-bottom:2px solid #9c9c9c;overflow:hidden;white-space:nowrap;line-height:19px}
th:first-child{padding-left:7px}
td{height:20px;padding:0 0 0 4px;border-right:1px solid #e2e2e2;border-bottom:1px solid #e2e2e2;white-space:nowrap;overflow:hidden;color:#3a3a3a;line-height:19px;background:#fff}
tr:nth-child(even) td{background:#f6f6f6}
.root{color:#3a3a4a;letter-spacing:.4px}
tr.op td{color:#7338d8}
tr.sl td:not(:first-child){background:#3399ff;color:#fff}
.ck{padding:0}
.ck svg{width:14px;height:14px;margin:2px 0 0 5px}
.t{display:flex;height:19px;margin-left:-4px;overflow:hidden;align-items:stretch;letter-spacing:.3px}
.g{display:flex;align-items:center;justify-content:flex-start;width:19px;flex:none}
.gv{background:repeating-linear-gradient(#9a9a9a 0 1px,transparent 1px 2px) 10px 0/1px 100% no-repeat}
.gt{background:repeating-linear-gradient(#9a9a9a 0 1px,transparent 1px 2px) 10px 0/1px 100% no-repeat,repeating-linear-gradient(90deg,#9a9a9a 0 1px,transparent 1px 2px) 10px 9px/9px 1px no-repeat}
.gl{background:repeating-linear-gradient(#9a9a9a 0 1px,transparent 1px 2px) 10px 0/1px 10px no-repeat,repeating-linear-gradient(90deg,#9a9a9a 0 1px,transparent 1px 2px) 10px 9px/9px 1px no-repeat}
.gr{background:repeating-linear-gradient(#9a9a9a 0 1px,transparent 1px 2px) 10px 9px/1px 10px no-repeat,repeating-linear-gradient(90deg,#9a9a9a 0 1px,transparent 1px 2px) 10px 9px/9px 1px no-repeat}
.ex{width:9px;height:9px;margin-left:6px}
.f{display:flex;align-items:center;justify-content:center;width:19px;flex:none}
.f svg,.f2 svg,.f3 svg{width:15px;height:15px}
.f2{display:flex;align-items:center;width:17px;flex:none;margin-left:-1px}
.f3{display:flex;align-items:center;width:15px;flex:none;margin-left:-1px}
.s{display:flex;align-items:center;justify-content:center;width:19px;flex:none}
.s16{display:flex;align-items:center;justify-content:center;width:16px;flex:none}
.o{display:flex;align-items:center;width:20px;flex:none;padding-left:1px}
.o svg{width:16px;height:16px}
.no{width:15px;height:15px}
.bu{width:10px;height:17px}
.ch{width:14px;height:14px}
.lb{padding-left:1px}
.lb0{margin-left:1px}
.lbs{flex:1;background:#3399ff;color:#fff;padding-left:3px}
.lbp{padding-left:4px}
.sb{padding:0;vertical-align:top;background:#f2f2f2!important;border-right:0;border-bottom:0}
.sb-up{height:19px;display:flex;align-items:center;justify-content:center}
.sb-up svg{width:8px;height:4px}
.sb-th{margin:0 1px;height:580px;border:1px solid #b4b4b4;border-radius:3px 3px 0 0;background:linear-gradient(90deg,#f8f8f8,#e4e4e4 40%,#c4c4c4);padding-top:139px}
.sb-gr{display:flex;flex-direction:column;gap:1px;align-items:center}
.sb-gr i{display:block;width:8px;height:1px;background:#777}

/* drawing canvas */
.canvas{flex:1;position:relative;background:#cccccc;overflow:hidden}
.draw{width:1008px;height:636px}
.top{stroke:#b0b0b0;stroke-width:1}
.ln{fill:none;stroke:#111;stroke-width:1}
.thick{fill:none;stroke:#000;stroke-width:2}
.dash{fill:none;stroke:#666;stroke-dasharray:9 7}
.wh{stroke:#f0f0f0;stroke-width:1}
.cn text{font:500 11.5px "Noto Sans CJK SC",sans-serif;letter-spacing:1.5px;text-anchor:middle;fill:#111}
.boxes rect{fill:none;stroke:#222}
.wnm{font:bold 11px "Liberation Mono",monospace;fill:#111}
.lat text{font:12px "DejaVu Sans",sans-serif;fill:#222}
.lat .mid{text-anchor:middle}
.geo,.geo path,.geo circle,.geo rect{fill:none;stroke:#222;stroke-width:.9}
.path{font:14px "DejaVu Sans","Noto Sans CJK SC",sans-serif;fill:#222}
.val text{font:14px "DejaVu Sans","Noto Sans CJK SC",sans-serif;fill:#333}
.val .sm{font:bold 10px "Liberation Sans","Noto Sans CJK SC",sans-serif;fill:#222}
.val .sm2{font:11px "Liberation Mono",monospace;fill:#222}
.dim text{font:12px "DejaVu Sans",sans-serif;fill:#333}
.iso,.iso path,.iso ellipse,.iso rect{fill:none;stroke:#222;stroke-width:2.300}
.iso-f ellipse{fill:#111}
.az{stroke:#0b33c8;stroke-width:7.500;fill:none}
.ay{stroke:#1f9a2c;stroke-width:5;fill:none}
.ayh{fill:#2fb23c}
.ax{stroke:#d62828;stroke-width:5;fill:none}
.axh{fill:#e83030}
.lred{font:33px "Liberation Sans",sans-serif;fill:#d83434}
.lgrn{font:33px "Liberation Sans",sans-serif;fill:#2fa23c}
.az1{stroke:#0b33c8;stroke-width:2.500;fill:none}
.ay1{stroke:#1f8a2c;stroke-width:2.500;fill:none}
.ax1{stroke:#d62828;stroke-width:1.800;fill:none}
.axh1{fill:#e23030}
.chev{fill:none;stroke:#111;stroke-width:1.300}
.chev2{fill:none;stroke:#111;stroke-width:1.400}
.chev3{fill:none;stroke:#111;stroke-width:2}
.dg{fill:#2a9a38}
.db{fill:#1238d8}
.lgrn1{font:11px "Liberation Sans",sans-serif;fill:#3aa848}
.lred1{font:11px "Liberation Sans",sans-serif;fill:#d83434}
.lblu{font:11px "Liberation Sans",sans-serif;fill:#2a5fe0}
.lgr{font:10px "Liberation Sans",sans-serif;fill:#555}
.mark{position:absolute;right:3px;bottom:4px;font:15px "Liberation Serif","Noto Sans CJK SC",serif;letter-spacing:.2px;color:#f6f6f6;text-shadow:0 0 1px #222,1px 1px 1px #444;white-space:nowrap}
```
